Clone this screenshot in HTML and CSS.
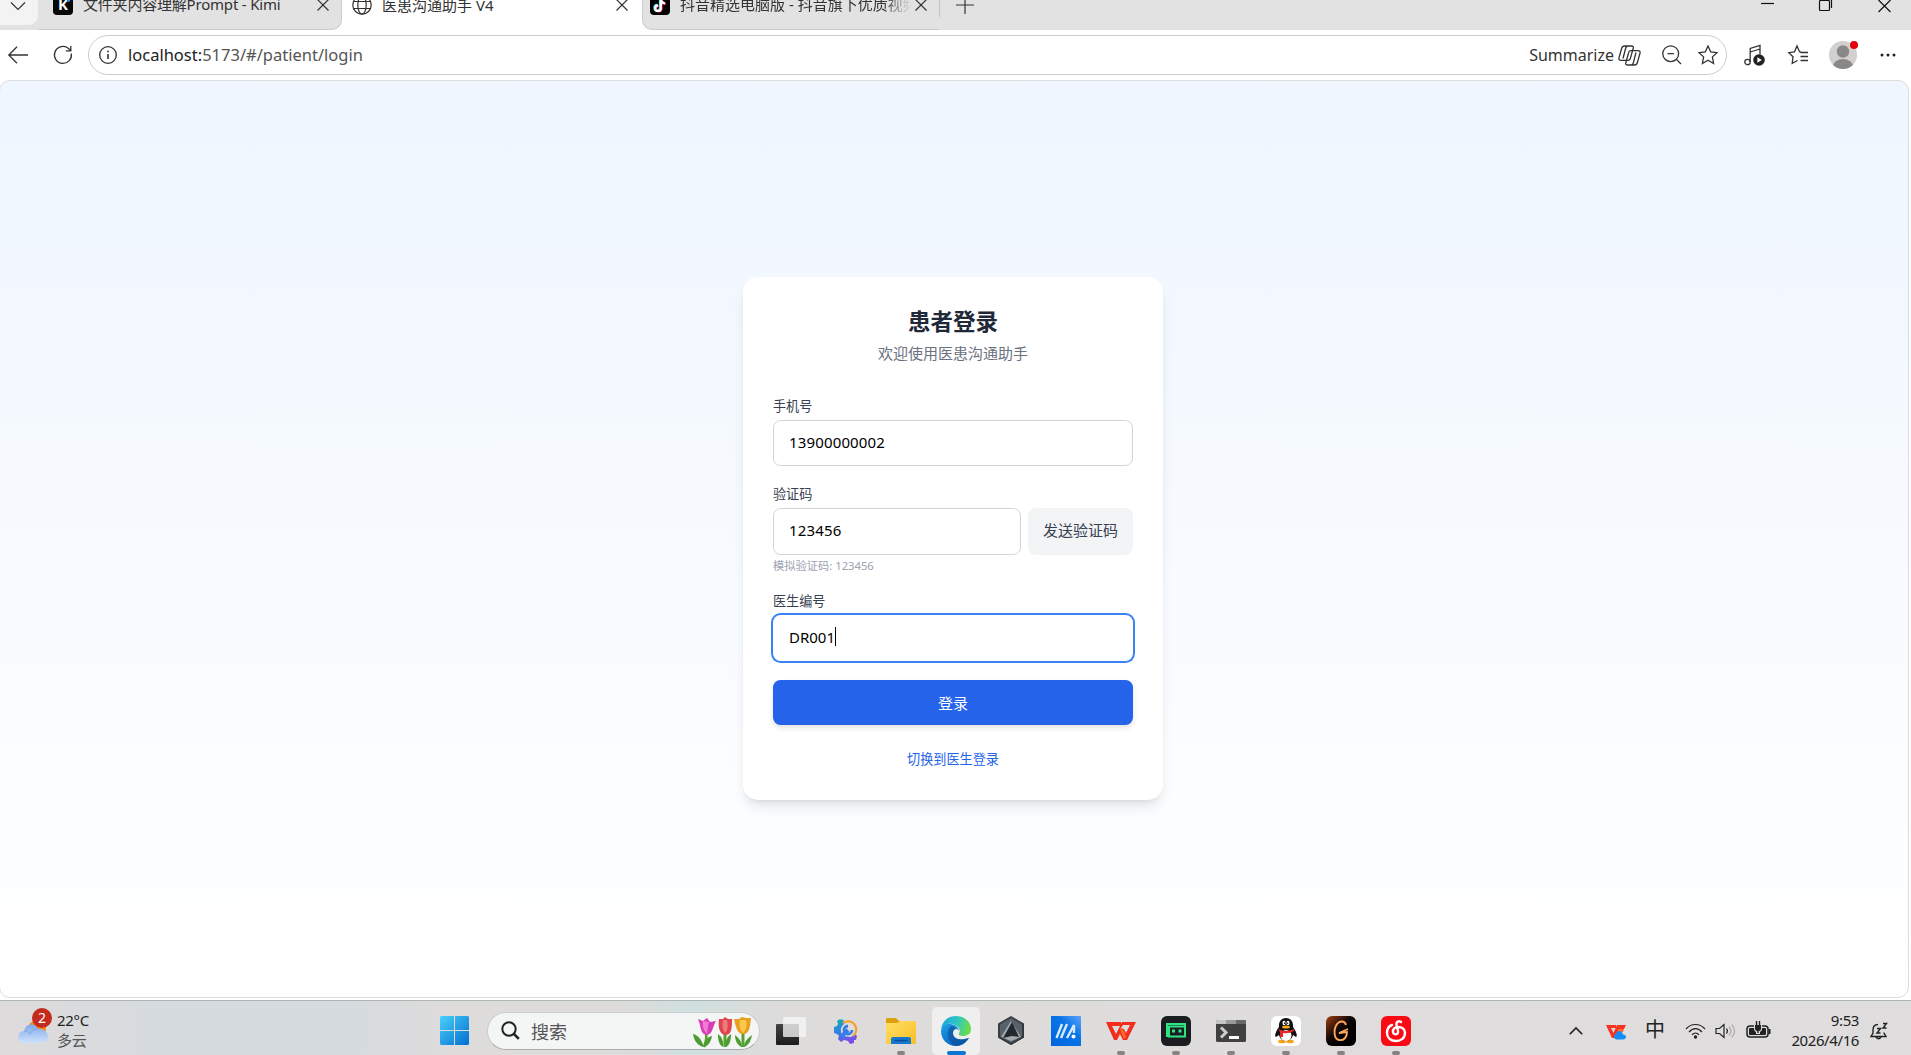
FILE: index.html
```html
<!DOCTYPE html>
<html lang="zh-CN">
  <head>
    <meta charset="UTF-8" />
    <title>医患沟通助手 V4</title>
    <link rel="stylesheet" href="styles.css">
  </head>
  <body>
    <header class="tabs">
      <div class="tab-menu">
        <svg width="16" height="10" viewBox="0 0 16 10"><path d="M1 1.5l7 7 7-7" /></svg>
      </div>
      <div class="tab tab-first">
        <span class="favicon kimi">K<i></i></span>
        <span class="tab-title">文件夹内容理解Prompt - Kimi</span>
        <svg class="close" width="12" height="12" viewBox="0 0 12 12"><path d="M.5.5l11 11M11.5.5l-11 11" /></svg>
      </div>
      <div class="tab active">
        <svg class="favicon" width="20" height="20" viewBox="0 0 20 20"><circle cx="10" cy="10" r="9.2" /><ellipse cx="10" cy="10" rx="4.2" ry="9.2" /><path d="M1.5 6.5h17M1.5 13.5h17" /></svg>
        <span class="tab-title">医患沟通助手 V4</span>
        <svg class="close" width="12" height="12" viewBox="0 0 12 12"><path d="M.5.5l11 11M11.5.5l-11 11" /></svg>
      </div>
      <div class="tab tab-last">
        <svg class="favicon" width="20" height="20" viewBox="0 0 20 20"><rect width="20" height="20" rx="4" fill="#000" stroke="none" /><g stroke-width="2.2"><path d="M10 3.5v9.2a2.8 2.8 0 1 1-2.8-2.8M10 4c.4 2.5 2 3.7 4.2 3.9" stroke="#25f4ee" /><path d="M11.6 4.5v9.2a2.8 2.8 0 1 1-2.8-2.8M11.6 5c.4 2.5 2 3.7 4.2 3.9" stroke="#fe2c55" /><path d="M10.8 4v9.2a2.8 2.8 0 1 1-2.8-2.8M10.8 4.5c.4 2.5 2 3.7 4.2 3.9" stroke="#fff" /></g></svg>
        <span class="tab-title fade">抖音精选电脑版 - 抖音旗下优质视频</span>
        <svg class="close" width="12" height="12" viewBox="0 0 12 12"><path d="M.5.5l11 11M11.5.5l-11 11" /></svg>
      </div>
      <div class="new-tab">
        <svg width="18" height="18" viewBox="0 0 18 18"><path d="M0 9h18M9 0v18" /></svg>
      </div>
      <div class="window-buttons">
        <svg width="13" height="14" viewBox="0 0 13 14"><path d="M0 4.5h13" /></svg>
        <svg width="14" height="14" viewBox="0 0 14 14"><rect x=".5" y="3.5" width="10" height="10" rx="1" /><path d="M3 .8h7.5a2 2 0 0 1 2 2V11" /></svg>
        <svg width="13" height="14" viewBox="0 0 13 14"><path d="M.5 1l12 12M12.500 1l-12 12" /></svg>
      </div>
    </header>

    <nav class="toolbar">
      <svg class="back" width="20" height="18" viewBox="0 0 20 18"><path d="M20 9H1M9 .8L.8 9 9 17.200" /></svg>
      <svg class="reload" width="20" height="20" viewBox="0 0 20 20"><path d="M18.300 8.500A8.500 8.500 0 1 1 14.500 2.800L17.800 5.500M17.800 1v4.800h-5" /></svg>
      <div class="address">
        <svg width="18" height="18" viewBox="0 0 18 18"><circle cx="9" cy="9" r="8.300" /><path d="M9 8v5" stroke-width="1.600" /><circle cx="9" cy="5.500" r="1" fill="#444" stroke="none" /></svg>
        <span class="url"><b>localhost:</b>5173/#/patient/login</span>
        <span class="summarize">Summarize</span>
        <svg class="copilot" width="23" height="21" viewBox="0 0 23 21"><path d="M6.500 1h7.200c1.300 0 2 .8 1.600 2l-3 10.500c-.3 1.200-1 1.900-2.300 1.900H3c-1.700 0-2.500-1-2-2.600L3.600 3.500C4 1.900 5 1 6.500 1zM10 1c-1.200 0-2 .8-2.300 2L5 13.500M16.500 20H9.300c-1.300 0-2-.8-1.600-2l3-10.500c.3-1.200 1-1.900 2.300-1.900h7c1.700 0 2.500 1 2 2.600l-2.600 9.300c-.4 1.600-1.400 2.500-2.900 2.500zM13 20c1.200 0 2-.8 2.300-2L18 7.500" /></svg>
        <svg class="zoom" width="20" height="20" viewBox="0 0 20 20"><circle cx="8.700" cy="8.700" r="7.900" /><path d="M5.500 8.700h6.400M14.500 14.500L19 19" /></svg>
        <svg width="20" height="20" viewBox="0 0 20 20"><path d="M10 1l2.700 5.800 6.300.8-4.600 4.300 1.200 6.600L10 15.300l-5.600 3.200 1.200-6.600L1 7.600l6.300-.8z" /></svg>
      </div>
      <svg class="media" width="21" height="22" viewBox="0 0 21 22"><circle cx="3.500" cy="18" r="2.700" /><path d="M6.200 18V4.500L16 1.500v9M6.200 8L16 5" /><circle cx="15" cy="16" r="5.800" fill="#222" stroke="none" /><path d="M13.400 13.300v5.400l4.400-2.700z" fill="#fff" stroke="none" /></svg>
      <svg class="favorites" width="21" height="20" viewBox="0 0 21 20"><path d="M13 7l-1.500-.3L9 1 6.500 6.800.8 7.700l4.200 4-.8 6.600L9.500 15.500M12.500 7.500H20M12.500 11.500H20M12.500 15.500H20" /></svg>
      <div class="avatar">
        <svg width="28" height="28" viewBox="0 0 28 28"><defs><clipPath id="face"><circle cx="14" cy="14" r="14" /></clipPath></defs><g clip-path="url(#face)" stroke="none"><rect width="28" height="28" fill="#d2d0ce" /><circle cx="14" cy="10.500" r="6.200" fill="#8a8886" /><ellipse cx="14" cy="25.500" rx="10" ry="7.500" fill="#8a8886" /></g></svg>
        <i></i>
      </div>
      <svg class="more" width="16" height="4" viewBox="0 0 16 4"><g fill="#222" stroke="none"><circle cx="2" cy="2" r="1.500" /><circle cx="8" cy="2" r="1.500" /><circle cx="14" cy="2" r="1.500" /></g></svg>
    </nav>

    <main>
      <form class="login-card">
        <h1>患者登录</h1>
        <p class="subtitle">欢迎使用医患沟通助手</p>

        <div class="field">
          <label>手机号</label>
          <div class="input">13900000002</div>
        </div>
        <div class="field">
          <label>验证码</label>
          <div class="code-row">
            <div class="input">123456</div>
            <button type="button" class="send-code">发送验证码</button>
          </div>
          <p class="hint">模拟验证码: 123456</p>
        </div>
        <div class="field">
          <label>医生编号</label>
          <div class="input focused">DR001<i class="caret"></i></div>
        </div>

        <button type="button" class="submit">登录</button>
        <div class="switch"><a>切换到医生登录</a></div>
      </form>
    </main>

    <footer class="taskbar">
      <div class="weather">
        <div class="weather-icon">
          <svg width="30" height="28" viewBox="0 0 30 28"><defs><linearGradient id="cloud" x2="0" y2="1"><stop stop-color="#7ea9ec" /><stop offset="1" stop-color="#cfe2fb" /></linearGradient></defs><circle cx="19" cy="13" r="9" fill="#f58a1f" /><path d="M6.500 27a6 6 0 0 1-.5-12C7 10.500 10 8.500 13.500 8.500c3 0 5 1.500 6.200 4.200 5-.5 9.800 2.300 10.300 7.800 0 4-2.500 6.500-6.500 6.500z" fill="url(#cloud)" /><path d="M6 15c3 0 5 1 6 3 1.500-3.500 4-5 7.700-5.300" fill="none" stroke="#7299dc" opacity=".6" /></svg>
          <span class="badge">2</span>
        </div>
        <div class="weather-text"><span>22°C</span><span>多云</span></div>
      </div>

      <svg class="start" width="29" height="29" viewBox="0 0 29 29"><defs><linearGradient id="win" gradientUnits="userSpaceOnUse" x1="0" y1="0" x2="29" y2="29"><stop stop-color="#4bd0fb" /><stop offset="1" stop-color="#006fd0" /></linearGradient></defs><path d="M1 0h13v14H0V1zM15 0h13l1 1v13H15zM0 15h14v14H1l-1-1zM15 15h14v13l-1 1H15z" fill="url(#win)" /></svg>

      <div class="search">
        <svg width="19" height="19" viewBox="0 0 19 19"><circle cx="8" cy="8" r="6.700" /><path d="M13 13l4.800 4.800" stroke-width="2.500" /></svg>
        <span>搜索</span>
        <svg class="tulips" width="60" height="31" viewBox="0 0 60 31" stroke="none">
          <path d="M13 16c1 5 0 9-2 14" fill="none" stroke="#58a032" stroke-width="2.500" />
          <path d="M11 30C9 23 5 18 0 17c1 7 5 12 11 13M11 30c0-6 3-10 8-11-1 6-4 10-8 11" fill="#4c9c32" />
          <path d="M5 2l5 2 4-3 3 4 6-1c-3 4-3 13-9 14C7 18 8 8 5 2" fill="#d83bb3" /><path d="M10 4c-1 6 1 10 4 13 1-6 1-9 2-12" fill="#f07bd4" />
          <path d="M32 15v15" stroke="#58a032" stroke-width="3" /><path d="M25 17c0 6 1 11 5 13 1-5-1-10-5-13M38 17c0 6-1 11-5 13-1-5 1-10 5-13" fill="#4c9c32" />
          <path d="M26 2l4 0 2-2 3 2 4 0c0 7 0 16-6 16-7 0-8-9-7-16" fill="#df454e" /><path d="M30 3c-1 6 0 10 2 13 3-3 3-8 2-13" fill="#f17c7e" />
          <path d="M50 15v15" stroke="#58a032" stroke-width="3" /><path d="M42 18c0 6 3 11 7 12 0-5-3-9-7-12M59 18c-1 6-4 11-8 12 0-5 4-9 8-12" fill="#4c9c32" />
          <path d="M41 2l5 0 3-2 4 1 5 0c-1 8-1 16-8 16-6 0-7-7-9-15" fill="#e9a01e" /><path d="M47 3c-1 5 0 10 3 13 4-4 4-9 3-13" fill="#fac94c" />
        </svg>
      </div>

      <div class="apps">
        <div class="app">
          <svg width="30" height="30" viewBox="0 0 30 30"><defs><linearGradient id="task" x2="0" y2="1"><stop stop-color="#444" /><stop offset="1" stop-color="#1c1c1c" /></linearGradient></defs><rect y="8" width="23" height="21" rx="1" fill="url(#task)" /><rect x="7" y="1" width="23" height="20" rx="1" fill="#f6f6f6" opacity=".78" /></svg>
        </div>
        <div class="app">
          <svg width="24" height="26" viewBox="0 0 24 26"><defs><linearGradient id="gear" gradientUnits="userSpaceOnUse" x1="4" y1="0" x2="14" y2="25"><stop stop-color="#12b5a6" /><stop offset=".5" stop-color="#347de9" /><stop offset="1" stop-color="#8149e8" /></linearGradient></defs><path d="M9 1l1 3 3-1-4 4a8 8 0 0 0 0 11l8 1 4-3 2 2-1 4-2 0 0 3-4 1-2-3-4-1-3 2-3-3 1-3-2-2-3-1V9l3-1 1-2-1-3 3-2 2 1z" fill="url(#gear)" /><path d="M9 5a8 8 0 1 1 10 13" fill="none" stroke="#f6a12b" stroke-width="2.200" /><path d="M7 19l7-7" stroke="#347de9" stroke-width="4" /><path d="M14 8a4 4 0 1 0 4 4" fill="none" stroke="#347de9" stroke-width="2.800" /></svg>
        </div>
        <div class="app running">
          <svg width="30" height="28" viewBox="0 0 30 28"><defs><linearGradient id="folder" x2="1" y2="1"><stop stop-color="#ffdf65" /><stop offset="1" stop-color="#f9bd25" /></linearGradient></defs><path d="M0 2Q0 1 1 1h9l3 3h15v8H0z" fill="#dda006" /><path d="M0 6h11l3-2h16v22q0 1-1 1H1q-1 0-1-1z" fill="url(#folder)" /><path d="M5 27v-5q0-2 2-2h16q2 0 2 2v5z" fill="#1479ce" /><path d="M8.500 23.500h13" stroke="#0a4c91" stroke-width="1.500" /></svg>
        </div>
        <div class="app running current">
          <svg width="30" height="30" viewBox="0 0 30 30"><defs><linearGradient id="edge1" x2="1" y2=".2"><stop stop-color="#1aa0db" /><stop offset=".55" stop-color="#2cc6c8" /><stop offset="1" stop-color="#68dc4d" /></linearGradient><linearGradient id="edge2" x2=".5" y2="1"><stop stop-color="#1ba2e5" /><stop offset="1" stop-color="#0967c2" /></linearGradient></defs><path d="M0 14C1 5 7 0 15 0c9 0 15 6 15 13 0 5-4 7-8 7-3 0-5-1-4-3 2-3 0-6-4-8C8 6 2 9 0 14" fill="url(#edge1)" /><path d="M0 15C1 9 6 7 10 8c5 1 8 4 8 7-1-3-6-3-6 2 0 6 7 8 16 5-3 5-8 8-13 8C6 30 0 23 0 15" fill="url(#edge2)" /><path d="M10 10c-6 6-3 17 5 20 5 0 10-3 13-8-9 3-16 1-16-5 0-2 1-4 3-4-1-2-3-3-5-3" fill="#104f99" opacity=".65" /></svg>
        </div>
        <div class="app">
          <svg width="26" height="30" viewBox="0 0 26 30"><path d="M13 0l13 7.500v14L13 29 0 21.500v-14z" fill="#383e44" /><path d="M13 2l11 6.500v12L13 27 2 20.500v-12z" fill="#596169" /><path d="M13 5L3 21l10 4 10-4z" fill="#a4abb1" /><path d="M14 6l7 15-7-1-9 2z" fill="#24292e" /><path d="M2 20.500L13 27l11-6.500V9l2-1.500v14L13 29 0 21.500z" fill="#343a40" /></svg>
        </div>
        <div class="app">
          <svg width="30" height="30" viewBox="0 0 30 30"><defs><linearGradient id="myasus" x1="0" y1="1" x2="1" y2="0"><stop stop-color="#0066df" /><stop offset=".6" stop-color="#0874e7" /><stop offset="1" stop-color="#62a4fa" /></linearGradient></defs><rect width="30" height="30" fill="url(#myasus)" /><path d="M5.500 22L11 8M10 22l6-14M16 22l7-13v8" fill="none" stroke="#d8e9fd" stroke-width="2.400" /><circle cx="22.500" cy="20.500" r="2" fill="#fff" /></svg>
        </div>
        <div class="app running">
          <svg width="30" height="20" viewBox="0 0 30 20"><path d="M0 1h15v4H6l4 8 6-12h14l-9 18h-4l-3-6-3 6H8z" fill="#f42c1b" /><path d="M14 8h4l2 4 4-8h-7z" fill="#e0dede" /><path d="M15 7l4 10" stroke="#ff6a2b" stroke-width="3" /></svg>
        </div>
        <div class="app running">
          <svg width="30" height="30" viewBox="0 0 30 30"><rect width="30" height="30" rx="6" fill="#1b1d21" /><path d="M8 20H6V8h18v2M8 10.500h16v10H8z" fill="none" stroke="#2fe581" stroke-width="2" /><path d="M11 15h3M17.500 15h3" stroke="#2fe581" stroke-width="3" /></svg>
        </div>
        <div class="app running">
          <svg width="30" height="22" viewBox="0 0 30 22"><rect width="30" height="22" rx="1.500" fill="#404040" /><path d="M1 0h9v4H0V1z" fill="#c4c4c4" /><path d="M10 0h10v4H10z" fill="#999" /><path d="M20 0h9l1 1v3H20z" fill="#686868" /><path d="M5 7.500l5 5-5 5" fill="none" stroke="#ccc" stroke-width="3" /><path d="M13 17.500h10" stroke="#fff" stroke-width="3" /></svg>
        </div>
        <div class="app running">
          <svg width="30" height="30" viewBox="0 0 30 30"><rect width="30" height="30" rx="6" fill="#fff" /><ellipse cx="11" cy="25.500" rx="4" ry="1.800" fill="#f7a512" /><ellipse cx="19" cy="25.500" rx="4" ry="1.800" fill="#f7a512" /><path d="M15 2c-5 0-7.500 4-7 9-3 4-5 9-3 10l3-2c1 4 4 6 7 6s6-2 7-6l3 2c2-1 0-6-3-10 .5-5-2-9-7-9" fill="#111" /><ellipse cx="15" cy="19.500" rx="5.500" ry="5.500" fill="#fff" /><path d="M7 13q8 4 16 0v2q-5 3-11 2v4H9v-5z" fill="#e8262a" /><ellipse cx="15" cy="11" rx="4" ry="1.600" fill="#f9a817" /><ellipse cx="13" cy="7" rx="1.500" ry="2.200" fill="#fff" /><ellipse cx="17" cy="7" rx="1.500" ry="2.200" fill="#fff" /><path d="M13.500 6.500v1.500M16.700 6.500v1.500" stroke="#111" /></svg>
        </div>
        <div class="app running">
          <svg width="30" height="30" viewBox="0 0 30 30"><defs><linearGradient id="ember" x2=".6" y2=".6"><stop stop-color="#a63e10" /><stop offset=".7" stop-color="#140905" /><stop offset="1" stop-color="#000" /></linearGradient></defs><rect width="30" height="30" rx="6" fill="url(#ember)" /><path d="M20 9c-1-4-6-5-9-1-4 6-3 15 2 16 5 1 8-3 8-8l-8 1 9-4" fill="none" stroke="#ffa85c" stroke-width="1.900" /></svg>
        </div>
        <div class="app running">
          <svg width="30" height="30" viewBox="0 0 30 30"><rect width="30" height="30" rx="6" fill="#fa0a14" /><path d="M20 6c-2-1.500-5-.5-4.500 2.500L17 15c.8 4-4.500 4.500-5 1-.4-3 2-5 5-5 5 0 7 3 7 6 0 5-4 8-9 8-6 0-9-4-9-8 0-4 2-7 5-8" fill="none" stroke="#fff" stroke-width="2.400" stroke-linecap="round" /></svg>
        </div>
      </div>

      <div class="tray">
        <svg class="chevron" width="14" height="8" viewBox="0 0 14 8"><path d="M.8 7.200L7 1l6.200 6.200" stroke-width="1.600" /></svg>
        <svg class="wps-cloud" width="20" height="16" viewBox="0 0 20 16"><g stroke="none"><path d="M0 1h10v3H5l2.500 5L11 1h9l-2 4h-5l-4 9H6z" fill="#f43320" /><path d="M13 5h5l-1 3h-5z" fill="#ff6a2b" /><path d="M10 15.500a3.300 3.300 0 0 1 0-6c2-3.500 6-3.500 7 1 4 0 4 4.500 0 5z" fill="#168df5" /></g></svg>
        <span class="ime">中</span>
        <svg class="wifi" width="21" height="16" viewBox="0 0 21 16"><path d="M1 6c5-6 14-6 19 0M4 9c4-4.500 9-4.500 13 0M7 11.800c2-2.400 5-2.400 7 0" /><circle cx="10.500" cy="14" r="1.700" fill="#222" stroke="none" /></svg>
        <svg class="volume" width="21" height="16" viewBox="0 0 21 16"><path d="M1 5.500h3.500L9 1.500v13l-4.500-4H1zM11.500 5.500q1.800 2.500 0 5" /><path d="M14 3.500q4 4.500 0 9M16.800 1.500q5.500 6.500 0 13" stroke="#aaa" /></svg>
        <svg class="battery" width="25" height="18" viewBox="0 0 25 18"><rect x="1" y="5" width="21" height="11" rx="3" stroke-width="1.500" /><rect x="3" y="7" width="17" height="7" rx="1" fill="#222" stroke="none" /><path d="M23.500 8v5" stroke-width="2" /><path d="M8 3h8v5q0 2-2 3v2h-4v-2q-2-1-2-3z" fill="#dfdddd" stroke="none" /><path d="M9 4h6v3.500q0 2-2 2.500h-2q-2-.5-2-2.500z" fill="#222" stroke="none" /><path d="M10.500 0v5M13.500 0v5M12 9v3" stroke-width="1.400" /></svg>
        <div class="clock"><span>9:53</span><span>2026/4/16</span></div>
        <svg class="bell" width="18" height="18" viewBox="0 0 18 18"><path d="M8 2.500C4.500 2.500 3 5 3 8v3l-2 3.500h15L14 11v-.5M6 15q2.500 3.500 5 0M7 6.500h3.500L7 11h3.500M13 1.500h3.500L13 6h3.500" stroke-width="1.400" /></svg>
      </div>
    </footer>
  </body>
</html>
```
FILE: styles.css
```css
:root {
  --chrome-bg: #e2e2e2;
  --icon: #333;
  --blue: #2563eb;
}

* {
  margin: 0;
  padding: 0;
  box-sizing: border-box;
}
html {
  font-size: 15px;
}
body {
  display: flex;
  flex-direction: column;
  height: 100vh;
  overflow: hidden;
  background: #fff;
  font-family: "Noto Sans", "Noto Sans CJK SC", sans-serif;
}
svg {
  display: block;
  flex: none;
  overflow: visible;
}

/* tab strip */
.tabs {
  display: flex;
  height: 30px;
  background: var(--chrome-bg);

  svg {
    fill: none;
    stroke: var(--icon);
    stroke-width: 1.2;
  }
}
.tab-menu {
  width: 38px;
  height: 25px;
  padding: 1px 0 0 10px;
  background: #f3f3f3;
  border-radius: 0 0 9px 0;
}
.tab {
  display: flex;
  align-items: center;
  height: 48px;
  margin-top: -18px;
  color: #333;
  font-size: 15px;

  .favicon {
    flex: none;
    width: 20px;
    height: 20px;
    margin-top: -2px;
  }
  .tab-title {
    margin: -3px 0 0 10px;
    flex: 1;
    line-height: 24px;
    white-space: nowrap;
    overflow: hidden;
  }
  .close {
    margin: -2px 14px 0 4px;
  }
}
.tab-first {
  width: 304px;
  padding-left: 15px;
  border-right: 1px solid #ccc;
  border-bottom: 1px solid #ccc;
  border-radius: 0 0 10px 0;
  box-shadow: 10px 0 0 #fff;
  background: var(--chrome-bg);

  .tab-title {
    letter-spacing: -0.2px;
  }
  .close {
    margin-right: 12px;
  }
}
.kimi {
  position: relative;
  border-radius: 4px;
  background: #080808;
  color: #fff;
  font: bold 15px/18px "Open Sans", sans-serif;
  text-align: center;

  i {
    position: absolute;
    top: 4px;
    right: 3px;
    width: 3px;
    height: 3px;
    border-radius: 50%;
    background: #168bff;
  }
}
.active {
  width: 300px;
  padding-left: 10px;
  background: #fff;
  position: relative;
}
.tab-last {
  width: 297px;
  padding-left: 7px;
  border-left: 1px solid #ccc;
  border-bottom: 1px solid #ccc;
  border-radius: 0 0 0 10px;
  box-shadow: -10px 0 0 #fff;
  background: var(--chrome-bg);

  .close {
    margin-right: 12px;
  }
  .fade {
    mask-image: linear-gradient(to right, #000 88%, transparent);
  }
}
.new-tab {
  height: 17px;
  padding-left: 16px;
  border-left: 1px solid #c4c4c4;

  svg {
    margin-top: -4px;
  }
}
.window-buttons {
  display: flex;
  gap: 45px;
  margin: -1px 20px 0 auto;

  svg {
    stroke: #111;
  }
  svg:nth-child(2) {
    margin-top: -2px;
  }
}

/* toolbar */
.toolbar {
  display: flex;
  align-items: center;
  height: 50px;
  padding: 0 15px 0 8px;

  svg {
    fill: none;
    stroke: var(--icon);
    stroke-width: 1.3;
  }
  .reload {
    margin: 0 15px 0 25px;
  }
  .media {
    margin-left: 17px;
  }
  .favorites {
    margin-left: 23px;
  }
  .avatar {
    position: relative;
    margin: 0 23px 0 20px;

    i {
      position: absolute;
      top: 0;
      right: -1px;
      width: 8px;
      height: 8px;
      border-radius: 50%;
      background: #e3000b;
    }
  }
}
.address {
  flex: 1;
  display: flex;
  align-items: center;
  height: 40px;
  padding: 0 8px 0 10px;
  border: 1px solid #ccc;
  border-radius: 20px;
  color: #555;
  font-size: 16.5px;

  .url {
    flex: 1;
    margin: -2px 0 0 11px;

    b {
      color: #222;
      font-weight: normal;
    }
  }
  .summarize {
    margin-top: -1px;
    color: #333;
    font-size: 16px;
  }
  .copilot {
    margin: 0 21px 0 4px;
  }
  .zoom {
    margin-right: 16px;
  }
}

/* page */
main {
  height: 918px;
  margin: 0 2px 0 -1px;
  padding-top: 196px;
  border: 1px solid #dcdcdc;
  border-radius: 11px;
  background: linear-gradient(#eff6ff, #fff);
}
.login-card {
  width: 28rem;
  margin: 0 auto 0 743px;
  padding: 2rem;
  border-radius: 1rem;
  background: #fff;
  box-shadow: 0 9px 14px -3px rgba(0, 0, 0, 0.1), 0 4px 6px -4px rgba(0, 0, 0, 0.1);

  h1 {
    color: #1f2937;
    font-size: 1.5rem;
    line-height: 2rem;
    text-align: center;
  }
  .subtitle {
    margin: 0.3rem 0 2.2rem;
    color: #6b7280;
    line-height: 1.5rem;
    text-align: center;
  }
  .field {
    margin-bottom: 1.25rem;
  }
  label {
    display: block;
    margin-bottom: 0.25rem;
    color: #374151;
    font-size: 0.875rem;
    line-height: 1.25rem;
  }
  .input {
    display: flex;
    align-items: center;
    flex: 1;
    height: 46.9px;
    padding: 0 1rem 2px;
    border: 1px solid #d1d5db;
    border-radius: 0.5rem;
    color: #000;
    letter-spacing: 0.15px;
  }
  .focused {
    border-color: transparent;
    box-shadow: 0 0 0 2px #3b82f6;
    letter-spacing: 0;
  }
  .caret {
    width: 1px;
    height: 19px;
    background: #000;
  }
  .code-row {
    display: flex;
    gap: 0.5rem;
  }
  button {
    border: none;
    border-radius: 0.5rem;
    font: inherit;
  }
  .send-code {
    width: 105px;
    padding-bottom: 3px;
    background: #f3f4f6;
    color: #374151;
  }
  .hint {
    margin-top: 0.25rem;
    color: #9ca3af;
    font-size: 0.75rem;
    line-height: 1rem;
  }
  .submit {
    display: block;
    width: 100%;
    height: 3rem;
    padding-bottom: 1px;
    background: var(--blue);
    color: #fff;
    box-shadow: 0 3px 6px -1px rgba(0, 0, 0, 0.15);
  }
  .switch {
    margin-top: 1.5rem;
    color: var(--blue);
    font-size: 0.875rem;
    line-height: 1.5rem;
    text-align: center;
  }
}

/* taskbar */
.taskbar {
  display: flex;
  align-items: center;
  height: 55px;
  margin-top: 2px;
  padding-top: 5px;
  border-top: 1px solid #aeb6b2;
  background: linear-gradient(to right, #dedbdc, #d6dbdf 160px, #d6dbdf 350px, #dedbdb 455px, #dedbdb 620px, #cfe0de 690px, #dedbdb 780px, #dfdddd);
}
.weather {
  display: flex;
  width: 440px;
  padding-left: 18px;
}
.weather-icon {
  position: relative;
  padding-top: 5px;

  .badge {
    position: absolute;
    top: -3px;
    left: 14px;
    width: 20px;
    height: 20px;
    border-radius: 50%;
    background: #c42b1c;
    color: #fff;
    font-size: 14px;
    line-height: 20px;
    text-align: center;
  }
}
.weather-text {
  display: flex;
  flex-direction: column;
  margin: -1px 0 0 9px;
  color: #222;
  font-size: 15px;
  line-height: 20px;
  letter-spacing: -0.3px;

  span:last-child {
    color: #555;
  }
}
.search {
  display: flex;
  align-items: center;
  width: 273px;
  height: 38px;
  margin: 0 3px 0 18px;
  padding: 0 6px 0 13px;
  border: 1px solid #ccc;
  border-bottom-color: #aaa;
  border-radius: 19px;
  background: #f4f5f5;
  color: #555;
  font-size: 18px;

  span {
    flex: 1;
    margin-left: 11px;
  }
  svg:first-child {
    fill: none;
    stroke: #222;
    stroke-width: 2;
  }
  .tulips {
    margin-top: 4px;
  }
}
.apps {
  display: flex;
  margin-left: 4px;
}
.app {
  position: relative;
  display: flex;
  align-items: center;
  justify-content: center;
  width: 48px;
  height: 48px;
  margin-right: 7px;
  border-radius: 5px;
}
.running::after {
  content: "";
  position: absolute;
  bottom: 0;
  width: 8px;
  height: 4px;
  border-radius: 2px;
  background: #858282;
}
.current {
  background: #f0efef;

  &::after {
    width: 19px;
    background: #0878d4;
  }
}
.tray {
  display: flex;
  align-items: center;
  margin-left: auto;
  padding-right: 23px;
  color: #222;

  svg {
    fill: none;
    stroke: #222;
    stroke-width: 1.2;
  }
  .wps-cloud {
    margin: 2px 19px 0 23px;
  }
  .ime {
    margin-top: -2px;
    font-size: 20px;
    line-height: 24px;
  }
  .wifi {
    margin: 0 9px 0 20px;
  }
  .battery {
    margin: 0 0 2px 10px;
  }
  .bell {
    margin-left: 11px;
  }
}
.clock {
  display: flex;
  flex-direction: column;
  width: 88px;
  margin-top: -2px;
  font-size: 15px;
  line-height: 20px;
  letter-spacing: -0.4px;
  text-align: right;
}
```
